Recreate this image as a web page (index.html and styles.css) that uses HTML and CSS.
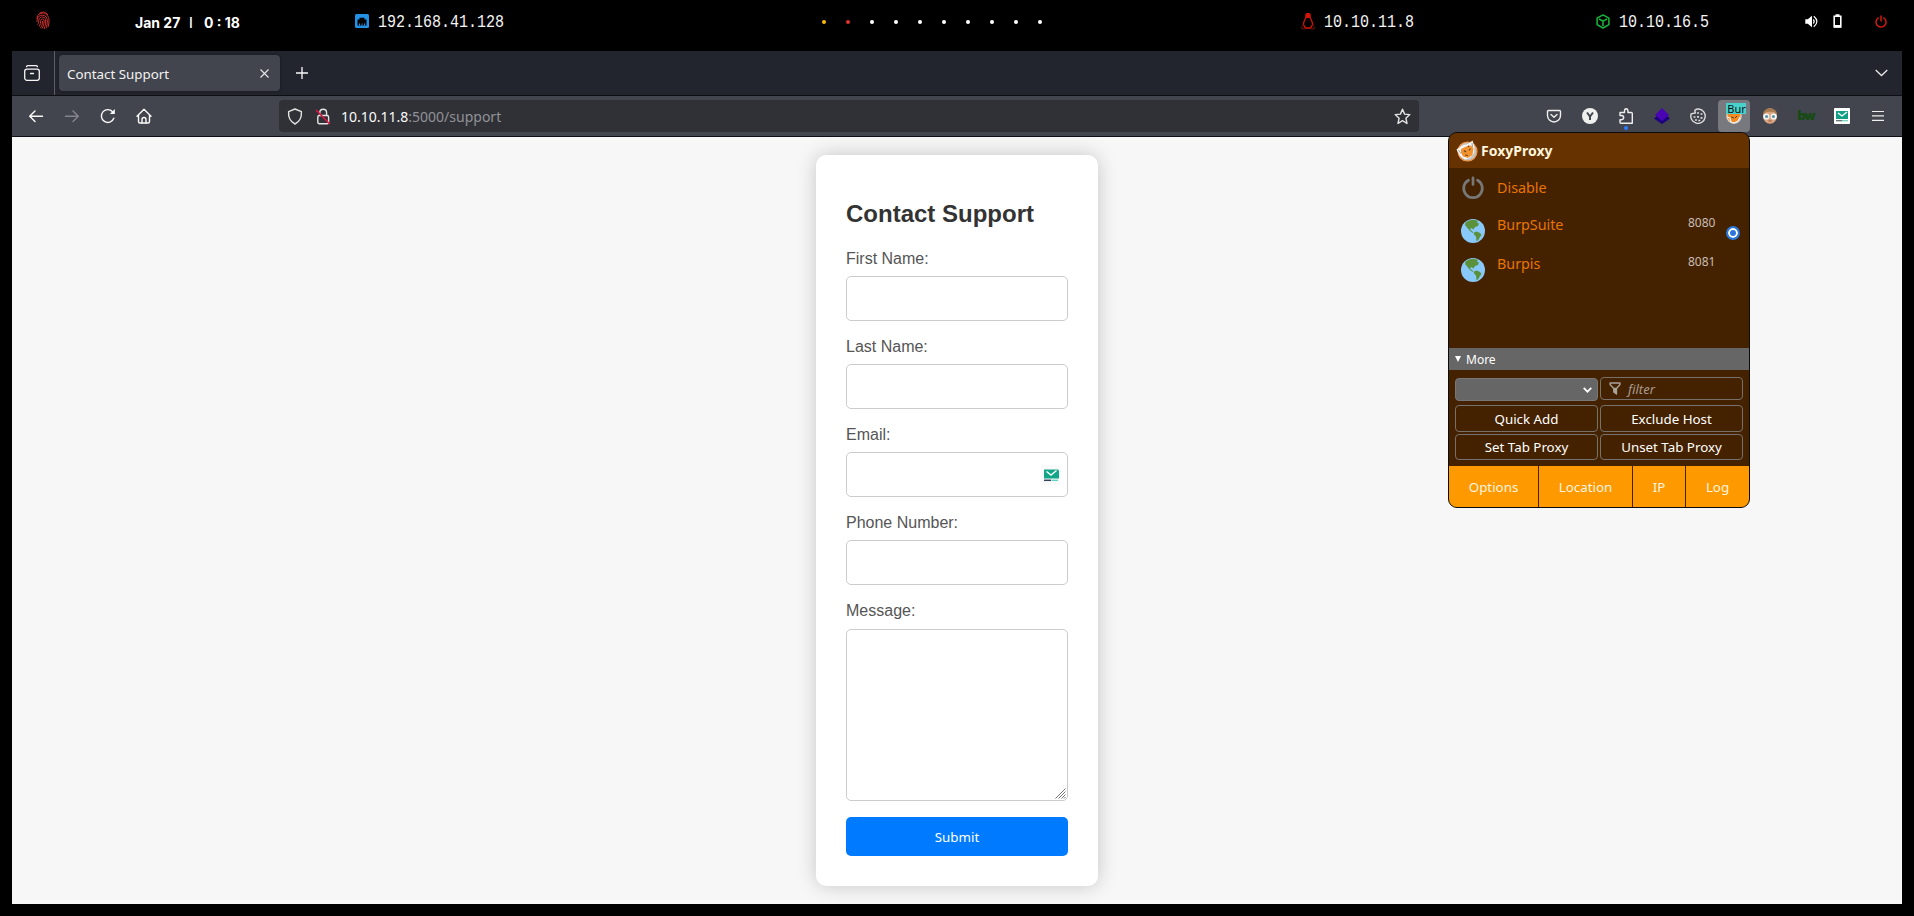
FILE: index.html
```html
<!DOCTYPE html>
<html lang="en">
<head>
<meta charset="utf-8">
<title>Contact Support</title>
<link rel="stylesheet" href="styles.css">
</head>
<body>
<header class="sysbar">
  <svg class="finger" width="14" height="19" viewBox="0 0 14 19" fill="none" stroke="#d32f2f" stroke-width="1"><path d="M2.5 3.5C5 .2 9.500 .2 12 4M1 8c0-6 5-6.500 7.500-5.500C12 3.800 13 7 13 10c0 2-.3 4-1 6M1 11V9.500C1.200 6 3.500 4 6.500 4.200 10 4.400 11.300 7 11.300 10c0 3-.4 5-1.300 7.500M1.500 13.500c1.500-1.500 1.200-3 1.300-4.500C3 7 4.800 5.800 6.800 6c2 .2 2.900 2 2.900 4 0 3-.6 5.500-1.700 8M3 15.500c1.700-2 1.500-4.500 1.700-6 .3-2.200 3.300-2.100 3.400.5 0 3-.8 5-2.100 7.500M4.500 17c1.500-2 2-4.500 2-7"/></svg>
  <div class="clock"><span class="date">Jan 27</span><span class="bar">I</span><span>0 : 18</span></div>
  <div class="net net-eth">
    <svg width="14" height="14" viewBox="0 0 14 14"><rect width="14" height="14" rx="1.500" fill="#2391e6"/><path d="M2.500 11.500v-6H4.500V3.800h5v1.700h2v6z" fill="#000"/><path d="M4.500 11.500V9.500M7 11.500V9.500M9.500 11.500V9.500" stroke="#2391e6" stroke-width="1"/></svg>
    <span class="mono">192.168.41.128</span>
  </div>
  <div class="dots"><i class="dot gold"></i><i class="dot red"></i><i class="dot"></i><i class="dot"></i><i class="dot"></i><i class="dot"></i><i class="dot"></i><i class="dot"></i><i class="dot"></i><i class="dot"></i></div>
  <div class="net net-target">
    <svg width="14" height="17" viewBox="0 0 14 17" fill="none"><path d="M5 4C4.600 1.500 5.200.5 7 .5s2.400 1 2 3.500c.2 2 2.600 4 2.600 7.500L9.500 15h-5l-2.100-3.500C2.400 8 4.800 6 5 4z" stroke="#d81408" stroke-width="1.300"/><path d="M5 .8h4V5H5z" fill="#d81408"/><path d="M.8 13.500v2.300h4M13.200 13.500v2.300H9.500M1 13l2-1M13 13l-2-1" stroke="#7a0f08"/></svg>
    <span class="mono">10.10.11.8</span>
  </div>
  <div class="net net-vpn">
    <svg width="14" height="15" viewBox="0 0 14 15" fill="none" stroke="#18b83c" stroke-width="1.500" stroke-linejoin="round"><path d="M7 .9l5.900 3.200v6.600L7 14l-5.900-3.300V4.100zM3 5l4 2.200L11 5M7 7.200V12"/></svg>
    <span class="mono">10.10.16.5</span>
  </div>
  <svg class="vol" width="13" height="13" viewBox="0 0 13 13"><path d="M.3 4.300h2.500L7 .8v11.400L2.800 8.700H.3z" fill="#fff"/><path d="M8.300 4.500q1.800 2 0 4M8.800 1.200q6.200 5.300 0 10.600" stroke="#fff" fill="none" stroke-width="1.200"/></svg>
  <svg class="bat" width="9" height="14" viewBox="0 0 9 14"><path d="M1.200 2.300h6.600v10.700H1.200z" stroke="#fff" stroke-width="1.600" fill="none"/><path d="M2.500.3h4v2h-4zM1 11h7v2.500H1z" fill="#fff"/></svg>
  <svg class="pow" width="12" height="13" viewBox="0 0 12 13" fill="none" stroke="#d6190f" stroke-width="1.500"><path d="M3.600 2.700a5 5 0 1 0 4.800 0M6 .5v6"/></svg>
</header>

<div class="browser">
  <div class="tabs">
    <div class="viewbtn"><svg width="16" height="16" viewBox="0 0 16 16" fill="none" stroke="#f5f5f5" stroke-width="1.300" stroke-linecap="round"><path d="M2.500 1.600Q3 .7 4 .7h8q1 0 1.500.9M6.500 8.500h3"/><rect x=".7" y="4.200" width="14.600" height="11.100" rx="2.200"/></svg></div>
    <div class="tab"><span class="tabname">Contact Support</span><svg width="9" height="9" viewBox="0 0 9 9" stroke="#e8e8e8" stroke-width="1.100"><path d="M.5.500l8 8M8.500.500l-8 8"/></svg></div>
    <svg class="plus" width="12" height="12" viewBox="0 0 12 12" stroke="#fafafa" stroke-width="1.300"><path d="M6 0v12M0 6h12"/></svg>
    <svg class="chev" width="13" height="8" viewBox="0 0 13 8" fill="none" stroke="#e8e8e8" stroke-width="1.300"><path d="M.7 1l5.800 5.500L12.300 1"/></svg>
  </div>
  <div class="toolbar">
    <div class="cells">
      <div class="cell"><svg width="16" height="16" viewBox="0 0 16 16" fill="none" stroke="#fafafa" stroke-width="1.400" stroke-linecap="round" stroke-linejoin="round"><path d="M14.500 8.300H1.700M7 3L1.700 8.300 7 13.600"/></svg></div>
      <div class="cell"><svg width="16" height="16" viewBox="0 0 16 16" fill="none" stroke="#85868c" stroke-width="1.400" stroke-linecap="round" stroke-linejoin="round"><path d="M1.500 8.300h12.800M9 3l5.300 5.300L9 13.600"/></svg></div>
      <div class="cell"><svg width="16" height="16" viewBox="0 0 16 16" fill="none" stroke="#fafafa" stroke-width="1.400" stroke-linecap="round"><path d="M13.800 10.200A6.400 6.400 0 1 1 13 4.300"/><path d="M14.800 1v5h-5z" fill="#fafafa" stroke="none"/></svg></div>
      <div class="cell"><svg width="16" height="16" viewBox="0 0 16 16" fill="none" stroke="#fafafa" stroke-width="1.400" stroke-linecap="round" stroke-linejoin="round"><path d="M1 8.200L8 1.200l7 7M2.500 7v6.500q0 1.500 1.500 1.500h8q1.500 0 1.500-1.500V7"/><path d="M6 15v-3.500Q6 9.500 8 9.500t2 2V15"/></svg></div>
    </div>
    <div class="url">
      <svg width="16" height="17" viewBox="0 0 16 17" fill="none" stroke="#e4e4e4" stroke-width="1.400" stroke-linejoin="round"><path d="M8 1l6.400 2.600c.4 5.400-1.600 10-6.400 12.400C3.200 13.600 1.200 9 1.600 3.600z"/></svg>
      <svg class="lock" width="16" height="17" viewBox="0 0 16 17" fill="none" stroke="#e4e4e4" stroke-width="1.400"><path d="M4.800 7.500V4.700Q4.800 1.200 8.200 1.200t3.400 3.500v2.800"/><rect x="2.800" y="7.500" width="10.800" height="8.200" rx="1.500"/><path d="M1 2l13.800 14" stroke="#e4113f" stroke-width="1.500"/></svg>
      <span class="addr">10.10.11.8<span class="dim">:5000/support</span></span>
      <svg class="star" width="17" height="17" viewBox="0 0 17 17" fill="none" stroke="#e4e4e4" stroke-width="1.400" stroke-linejoin="round"><path d="M8.500 1.200l2.100 4.900 5.200.5-3.900 3.600 1.100 5.300-4.500-2.800L4 15.500l1.100-5.300L1.200 6.600l5.200-.5z"/></svg>
    </div>
    <div class="cells exts">
      <div class="cell"><svg width="16" height="16" viewBox="0 0 16 16" fill="none" stroke="#eee" stroke-width="1.400" stroke-linecap="round" stroke-linejoin="round"><path d="M2.500 2.500h11q1 0 1 1V7.500a6.500 6.500 0 0 1-13 0v-4q0-1 1-1z"/><path d="M5 6.500l3 2.800 3-2.800"/></svg></div>
      <div class="cell"><svg width="16" height="16" viewBox="0 0 16 16"><circle cx="8" cy="8" r="8" fill="#f0f0ee"/><path d="M5 4.500l3 4 3-4M8 8.500v3.500" fill="none" stroke="#46484f" stroke-width="2"/></svg></div>
      <div class="cell puzzle"><svg width="16" height="16" viewBox="0 0 16 16" fill="none" stroke="#eee" stroke-width="1.400" stroke-linejoin="round"><path d="M2 7.500V4.500H6.500V3Q6.500.8 8.200.8T9.900 3v1.500H13.300q1 0 1 1v9.800H3q-1 0-1-1V11.800h1.500Q5.700 11.500 5.700 9.600T3.500 7.500z" /></svg></div>
      <div class="cell"><svg width="16" height="16" viewBox="0 0 16 16"><path d="M0 10.500L4 7h8l4 3.500L8 16z" fill="#1d0080"/><path d="M8 0l7 7-7 6-7-6z" fill="#4904b4"/></svg></div>
      <div class="cell"><svg width="16" height="16" viewBox="0 0 16 16" fill="none" stroke="#ddd" stroke-width="1.400"><path d="M8.800 1A7.200 7.200 0 1 1 1.200 5.800L5.300 5 4.800 2.300Q6.500.9 8.800 1z"/><path d="M8 4.200v1.600M11.500 5.200v1.600M4.500 8.200v1.600M8 8v1.800M11.500 9v1.800M6 11.300v1.500M9.300 11.800v1.500" stroke-width="1.900"/></svg></div>
      <div class="cell"><div class="active"><svg width="16" height="16" viewBox="0 0 16 16"><circle cx="8" cy="8" r="7.800" fill="#d8d3cb"/><circle cx="8" cy="8" r="6.500" fill="#f58b1f"/><path d="M1 9l3 1 1 4 3 1 4-2 2-4" fill="none" stroke="#eee" stroke-width="1.200"/><path d="M5 9l3 1M11 8l-2 2" stroke="#694020"/></svg><span class="badge">Bur</span></div></div>
      <div class="cell"><svg width="16" height="16" viewBox="0 0 16 16"><ellipse cx="8" cy="8" rx="7" ry="7.800" fill="#d9a581"/><path d="M1 7Q1 .5 8 .5T15 7q-2-2.500-3.500-3.200H5Q3 4.500 1 7z" fill="#a57a4d"/><circle cx="4.300" cy="8.500" r="3.100" fill="#f4f8f8"/><circle cx="11.700" cy="8.500" r="3.100" fill="#f4f8f8"/><circle cx="4.600" cy="8.500" r="1.600" fill="#5c92a0"/><circle cx="11.400" cy="8.500" r="1.600" fill="#5c92a0"/><path d="M6.500 13h3" stroke="#9c5343"/></svg></div>
      <div class="cell"><span class="bw">bw</span></div>
      <div class="cell"><svg width="16" height="16" viewBox="0 0 16 16"><rect width="16" height="16" rx="1" fill="#fff"/><path d="M2 3h12v8H2z" fill="#15a085"/><path d="M4 5l4 3 5-4" fill="none" stroke="#fff" stroke-width="1.300"/><path d="M2 12.700h6" stroke="#53666b" stroke-width="1.200"/><path d="M8 12.700h6" stroke="#6bd1bd" stroke-width="1.200"/></svg></div>
      <div class="cell"><svg width="16" height="16" viewBox="0 0 16 16" stroke="#eee" stroke-width="1.200"><path d="M2 3.500h12M2 7.900h12M2 12.300h12"/></svg></div>
    </div>
  </div>
  <main class="page">
    <form class="card">
      <h1>Contact Support</h1>
      <label for="fn">First Name:</label><input id="fn" class="field">
      <label for="ln">Last Name:</label><input id="ln" class="field">
      <label for="em">Email:</label>
      <div class="field mailfield"><svg width="20" height="20" viewBox="0 0 20 20"><rect width="20" height="20" fill="#fafafa"/><path d="M3 4.500h14l1 1v8H3z" fill="#12a587"/><path d="M5.500 6.500L10 10l5.500-4.500" fill="none" stroke="#fff" stroke-width="1.500"/><path d="M3 15.300h7" stroke="#334057" stroke-width="1.500"/><path d="M10.500 15.300H17" stroke="#55d2bd" stroke-width="1.300"/></svg></div>
      <label for="ph">Phone Number:</label><input id="ph" class="field">
      <label for="ms">Message:</label>
      <div class="field message"><svg width="11" height="11" viewBox="0 0 11 11" stroke="#666" stroke-width=".9"><path d="M.5 10.500l10-10M3.500 10.500l7-7M6.500 10.500l4-4M9 10.500L10.500 9"/></svg></div>
      <button class="submit" type="button">Submit</button>
    </form>
  </main>
</div>

<aside class="popup">
  <div class="phead">
    <svg width="22" height="22" viewBox="0 0 22 22"><circle cx="11.500" cy="11.500" r="9.500" fill="#c4c4c4" stroke="#eb9548" stroke-width="1.200"/><path d="M.5 9.500l6-4L12 4l4.500-3.500L18.500 7l-.5 6-4 5-5 1.500L4 16z" fill="#f7f7f7"/><path d="M5 9l5-2.500L15 5.500l2.500 3-1 6.500-4.500 3-5-1.500-2-4z" fill="#f2932f"/><path d="M8 10.500l2 1.500M14.500 8.500l-1.500 2M9 15l3 .5M12 7l1-1.500" stroke="#6c4423" stroke-width="1.200"/><path d="M2.500 10l2.500 3.500M16 3l.5 4" stroke="#888" stroke-width=".8"/></svg>
    <b>FoxyProxy</b>
  </div>
  <div class="plist">
    <div class="prow r1"><svg width="24" height="24" viewBox="0 0 24 24" fill="none" stroke="#777" stroke-width="2.700" stroke-linecap="round"><path d="M7.500 4.200a9.300 9.300 0 1 0 9 0M12 1.800V8.500"/></svg><span class="pname">Disable</span></div>
    <div class="prow"><svg width="24" height="24" viewBox="0 0 24 24"><circle cx="12" cy="12" r="12" fill="#88c9f9"/><path d="M4.500 3.500L8 1.500l4-.8 5 1-1 2 2 .8-1 2.500-3 1-1.500 2.500-2-1.500-1.500 1.500 2.500 2 1.500 2-1-.5-3-2-3-3.500L4 6z" fill="#5c913b"/><path d="M13 13.500l3-1 3 1.500 1.500 2-1.500 2-2 3.500-1.500.5-.5-4.500-2-2z" fill="#5c913b"/></svg><span class="pname">BurpSuite</span><span class="port">8080</span><i class="radio"></i></div>
    <div class="prow"><svg width="24" height="24" viewBox="0 0 24 24"><circle cx="12" cy="12" r="12" fill="#88c9f9"/><path d="M4.500 3.500L8 1.500l4-.8 5 1-1 2 2 .8-1 2.500-3 1-1.500 2.500-2-1.500-1.500 1.500 2.500 2 1.500 2-1-.5-3-2-3-3.500L4 6z" fill="#5c913b"/><path d="M13 13.500l3-1 3 1.500 1.500 2-1.500 2-2 3.500-1.500.5-.5-4.500-2-2z" fill="#5c913b"/></svg><span class="pname">Burpis</span><span class="port">8081</span></div>
  </div>
  <div class="more"><svg width="6" height="6" viewBox="0 0 6 6"><path d="M0 0h6L3 6z" fill="#fff"/></svg>More</div>
  <div class="tools">
    <div class="tool select"><svg width="9" height="6" viewBox="0 0 9 6" fill="none" stroke="#fff" stroke-width="1.700"><path d="M.7.900l3.800 3.800L8.300.9"/></svg></div>
    <div class="tool filter"><svg width="12" height="13" viewBox="0 0 12 13" fill="none" stroke="#aaa39c" stroke-width="1.300" stroke-linejoin="round"><path d="M1 1h10v1.500L7.500 6.500V12L4.800 10V6.500L1 2.500z"/><path d="M5.300 6.500h2V11.500l-2-1.500z" fill="#aaa39c"/></svg><em>filter</em></div>
    <div class="tool">Quick Add</div><div class="tool">Exclude Host</div>
    <div class="tool low">Set Tab Proxy</div><div class="tool low">Unset Tab Proxy</div>
  </div>
  <div class="pfoot"><span>Options</span><span>Location</span><span>IP</span><span>Log</span></div>
</aside>
</body>
</html>
```
FILE: styles.css
```css
* { box-sizing: border-box; }
body { margin: 0; width: 1914px; height: 916px; background: #000; overflow: hidden; position: relative; font-family: "Noto Sans", sans-serif; }
svg { display: block; flex: none; }

.sysbar { height: 51px; display: flex; align-items: flex-start; padding: 0 27px 0 36px; color: #fff; }
.finger { margin-top: 11px; }
.clock { display: flex; width: 110px; margin: 14px 0 0 85px; font: 700 14px/18px "Inter", sans-serif; white-space: nowrap; }
.date { width: 54px; }
.bar { width: 15px; font-weight: 500; }
.net { display: flex; align-items: center; gap: 9px; height: 16px; margin-top: 13px; }
.net-eth { margin-left: 111px; width: 150px; }
.mono { font: 19px/18px "Liberation Mono", monospace; display: block; transform: scaleX(.79); transform-origin: left; white-space: nowrap; width: 90px; padding-top: 2px; color: #f4f4f4; }
.dots { display: flex; gap: 20px; margin: 20px 0 0 318px; }
.dot { width: 4px; height: 4px; border-radius: 50%; background: #fff; }
.gold { background: #fbb908; }
.red { background: #e2302c; }
.net-target { margin-left: 259px; margin-top: 13px; }
.net-vpn { margin-left: 182px; }
.vol { margin: 15px 0 0 96px; }
.bat { margin: 14px 0 0 15px; }
.pow { margin: 15px 0 0 33px; }

.browser { width: 1890px; height: 853px; margin-left: 12px; display: flex; flex-direction: column; }
.tabs { height: 45px; flex: none; display: flex; align-items: center; background: #23252e; border-bottom: 1px solid #0e0f14; }
.viewbtn { width: 43px; height: 44px; border-right: 1px solid #5b5d65; padding: 14px 0 0 12px; }
.tab { width: 221px; height: 36px; margin-left: 4px; border-radius: 4px; background: #42454d; color: #f2f2f2; display: flex; align-items: center; justify-content: space-between; padding: 0 11px 0 8px; font-size: 13.333px; box-shadow: 0 0 3px #15161c; }
.tabname { padding-top: 2px; }
.plus { margin-left: 16px; }
.chev { margin-left: auto; margin-right: 14px; }
.toolbar { height: 41px; flex: none; display: flex; align-items: center; background: #42454d; border-bottom: 1px solid #0e0f14; padding-left: 6px; }
.cells { display: flex; }
.cell { width: 36px; height: 32px; display: flex; align-items: center; justify-content: center; position: relative; }
.url { width: 1140px; height: 32px; margin-left: 117px; border-radius: 4px; background: #303136; display: flex; align-items: center; padding: 0 8px; font-size: 14px; color: #fafafa; }
.lock { margin-left: 12px; }
.addr { margin-left: 10px; }
.dim { color: #919296; }
.star { margin-left: auto; }
.exts { margin-left: 117px; }
.puzzle::after { content: ""; position: absolute; left: 16px; top: 26px; width: 4px; height: 4px; border-radius: 50%; background: #2b7dff; }
.active { position: relative; width: 32px; height: 32px; border-radius: 4px; background: #77797e; display: flex; align-items: center; justify-content: center; }
.badge { position: absolute; left: 8px; top: 3px; width: 20px; height: 11px; background: #48d1cc; color: #111; font-size: 11px; line-height: 11px; text-align: center; padding-left: 1px; }
.bw { font: 900 12.5px/16px "Inter", sans-serif; color: #164a12; letter-spacing: -1px; }

.page { flex: 1; background: #f7f7f7; display: flex; justify-content: center; padding-top: 18px; overflow: hidden; }
.card { width: 282px; height: 731px; background: #fff; border-radius: 10px; padding: 45px 30px 0; box-shadow: 0 0 20px rgba(0,0,0,.2); font: 16px/18px "Liberation Sans", sans-serif; color: #555; display: flex; flex-direction: column; }
h1 { margin: 0 0 22px; font-size: 24px; line-height: 28px; color: #333; white-space: nowrap; }
label { height: 18px; margin-bottom: 8px; }
.field { display: block; width: 222px; height: 45px; flex: none; border: 1px solid #ccc; border-radius: 5px; background: #fff; margin-bottom: 17px; padding: 0; outline: 0; }
.mailfield { display: flex; justify-content: flex-end; padding: 12px 6px; }
.message { height: 172px; margin: 1px 0 16px; display: flex; align-items: flex-end; justify-content: flex-end; padding: 0 1px 1px 0; }
.submit { height: 39px; flex: none; border: 0; border-radius: 5px; background: #007bff; color: #fff; font: 13.333px "Noto Sans", sans-serif; padding: 0; }

.popup { position: absolute; left: 1448px; top: 132px; width: 302px; height: 376px; border: 1px solid #0c0c0d; border-radius: 9px; background: #442200; overflow: hidden; color: #fff; }
.phead { height: 35px; background: #663300; display: flex; align-items: center; gap: 3px; padding-left: 7px; font-size: 14px; color: #fff5dc; }
.plist { height: 180px; padding: 8px 0 0 12px; }
.prow { height: 39px; display: flex; position: relative; padding-top: 4px; }
.prow svg { margin-top: 4px; }
.prow.r1 { height: 35px; padding-top: 0; }
.prow.r1 svg { margin-top: 0; }
.prow.r1 .pname { margin-top: 2px; }
.pname { margin-left: 12px; width: 191px; font-size: 14.3px; line-height: 19px; color: #e97400; }
.port { font-size: 12px; line-height: 16px; color: #c9bdb4; }
.radio { width: 14px; height: 14px; margin: 11px 0 0 11px; border-radius: 50%; background: #2b76d9; border: 2px solid #2b76d9; box-shadow: inset 0 0 0 2px #fff; }
.more { height: 22px; background: #666; display: flex; align-items: center; gap: 5px; padding-left: 6px; font-size: 12px; }
.tools { display: grid; grid-template-columns: 143px 143px; grid-template-rows: 28px 29px 26px; column-gap: 2px; padding: 7px 6px 0; height: 96px; font-size: 13.333px; }
.tool { height: 27px; border: 1px solid #77716c; border-radius: 4px; display: flex; align-items: center; justify-content: center; }
.tool.low { height: 26px; }
.tool.select { height: 23px; margin-top: 1px; background: #666; justify-content: flex-end; padding-right: 5px; border-color: #777; }
.tool.filter { height: 23px; justify-content: flex-start; padding-left: 8px; gap: 7px; color: #a89b90; font-size: 13px; }
.pfoot { height: 41px; background: #ff9900; display: grid; grid-template-columns: 90px 94px 53px 63px; font-size: 13.333px; line-height: 34px; text-align: center; color: #fff5e0; }
.pfoot span { border-right: 1px solid #442200; padding-top: 4px; }
.pfoot span:last-child { border-right: 0; }
```
